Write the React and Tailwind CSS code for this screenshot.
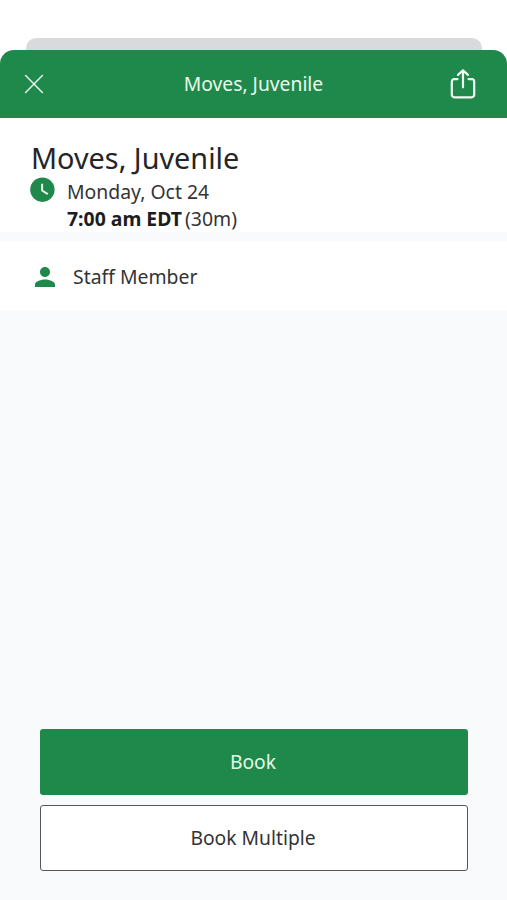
import React from 'react';

function CloseIcon() {
  return (
    <svg width="20" height="20" viewBox="0 0 20 20" fill="none" stroke="#eefbf0" strokeWidth="1.4" strokeLinecap="round">
      <path d="M1.6 1.6L18.4 18.4M18.4 1.6L1.6 18.4" />
    </svg>
  );
}

function ShareIcon() {
  return (
    <svg width="26" height="32" viewBox="0 0 26 32" fill="none" stroke="#f1fcf3" strokeWidth="2.2" strokeLinecap="round" strokeLinejoin="round">
      <path d="M7.5 11.1H4.3A2.5 2.5 0 0 0 1.8 13.6V26.8A2.5 2.5 0 0 0 4.3 29.3H21.7A2.5 2.5 0 0 0 24.2 26.8V13.6A2.5 2.5 0 0 0 21.7 11.1H18.5" />
      <path d="M13 19.3V2.4M8 6.9L13 2.4L18 6.9" />
    </svg>
  );
}

function ClockIcon() {
  return (
    <svg width="25" height="25" viewBox="0 0 25 25" fill="none">
      <circle cx="12.4" cy="12.7" r="12.2" fill="#1f894b" />
      <path d="M12.1 6.8V13.5L17.8 17.2" stroke="#e6f6e6" strokeWidth="2" />
    </svg>
  );
}

function PersonIcon() {
  return (
    <svg width="20" height="20" viewBox="4 4 16 16" fill="#1f894b">
      <path d="M12 12c2.21 0 4-1.79 4-4s-1.79-4-4-4-4 1.79-4 4 1.79 4 4 4zm0 2c-2.67 0-8 1.34-8 4v2h16v-2c0-2.66-5.33-4-8-4z" />
    </svg>
  );
}

function App() {
  return (
    <div className="flex h-[900px] w-[507px] flex-col bg-white pt-[38px] font-['Noto_Sans',sans-serif] text-[#333335]">
      {/* Edge of the sheet behind */}
      <div className="mr-[25px] ml-[26px] h-3 shrink-0 rounded-t-[10px] bg-[#d9dadb]" />

      <header className="flex h-[68px] shrink-0 items-center justify-between rounded-t-[14px] bg-[#1f894b] pr-[31px] pl-6">
        <button type="button" aria-label="Close" className="flex w-[33px]">
          <CloseIcon />
        </button>
        <h1 className="text-[19.3px] leading-7 text-[#eafaec]">Moves, Juvenile</h1>
        <button type="button" aria-label="Share" className="flex">
          <ShareIcon />
        </button>
      </header>

      <main className="flex flex-1 flex-col bg-[#f8fafb]">
        <section className="h-[114px] bg-white pt-[22px] pl-[30px]">
          <h2 className="pl-px text-[28.8px] leading-[36px] text-[#242527]">Moves, Juvenile</h2>
          <div className="flex gap-3 pt-px">
            <ClockIcon />
            <div className="pt-px text-[19.4px] leading-[27px]">
              <p>Monday, Oct 24</p>
              <p>
                <span className="mr-[3px] font-bold text-[#1c1d1f]">7:00 am EDT</span>
                (30m)
              </p>
            </div>
          </div>
        </section>

        <section className="mt-[9px] flex h-[69px] items-center gap-[18px] bg-white pt-0.5 pl-[35px]">
          <PersonIcon />
          <p className="text-[19.4px] leading-7">Staff Member</p>
        </section>

        <div className="mt-auto flex flex-col gap-[10px] pr-[39px] pb-[29px] pl-10 text-[19.3px]">
          <button type="button" className="h-[66px] rounded-[3px] bg-[#1f894b] pr-0.5 text-[#e4f8e6]">
            Book
          </button>
          <button type="button" className="h-[66px] rounded-[3px] border border-[#55565a] bg-white pr-0.5">
            Book Multiple
          </button>
        </div>
      </main>
    </div>
  );
}

export default App;
